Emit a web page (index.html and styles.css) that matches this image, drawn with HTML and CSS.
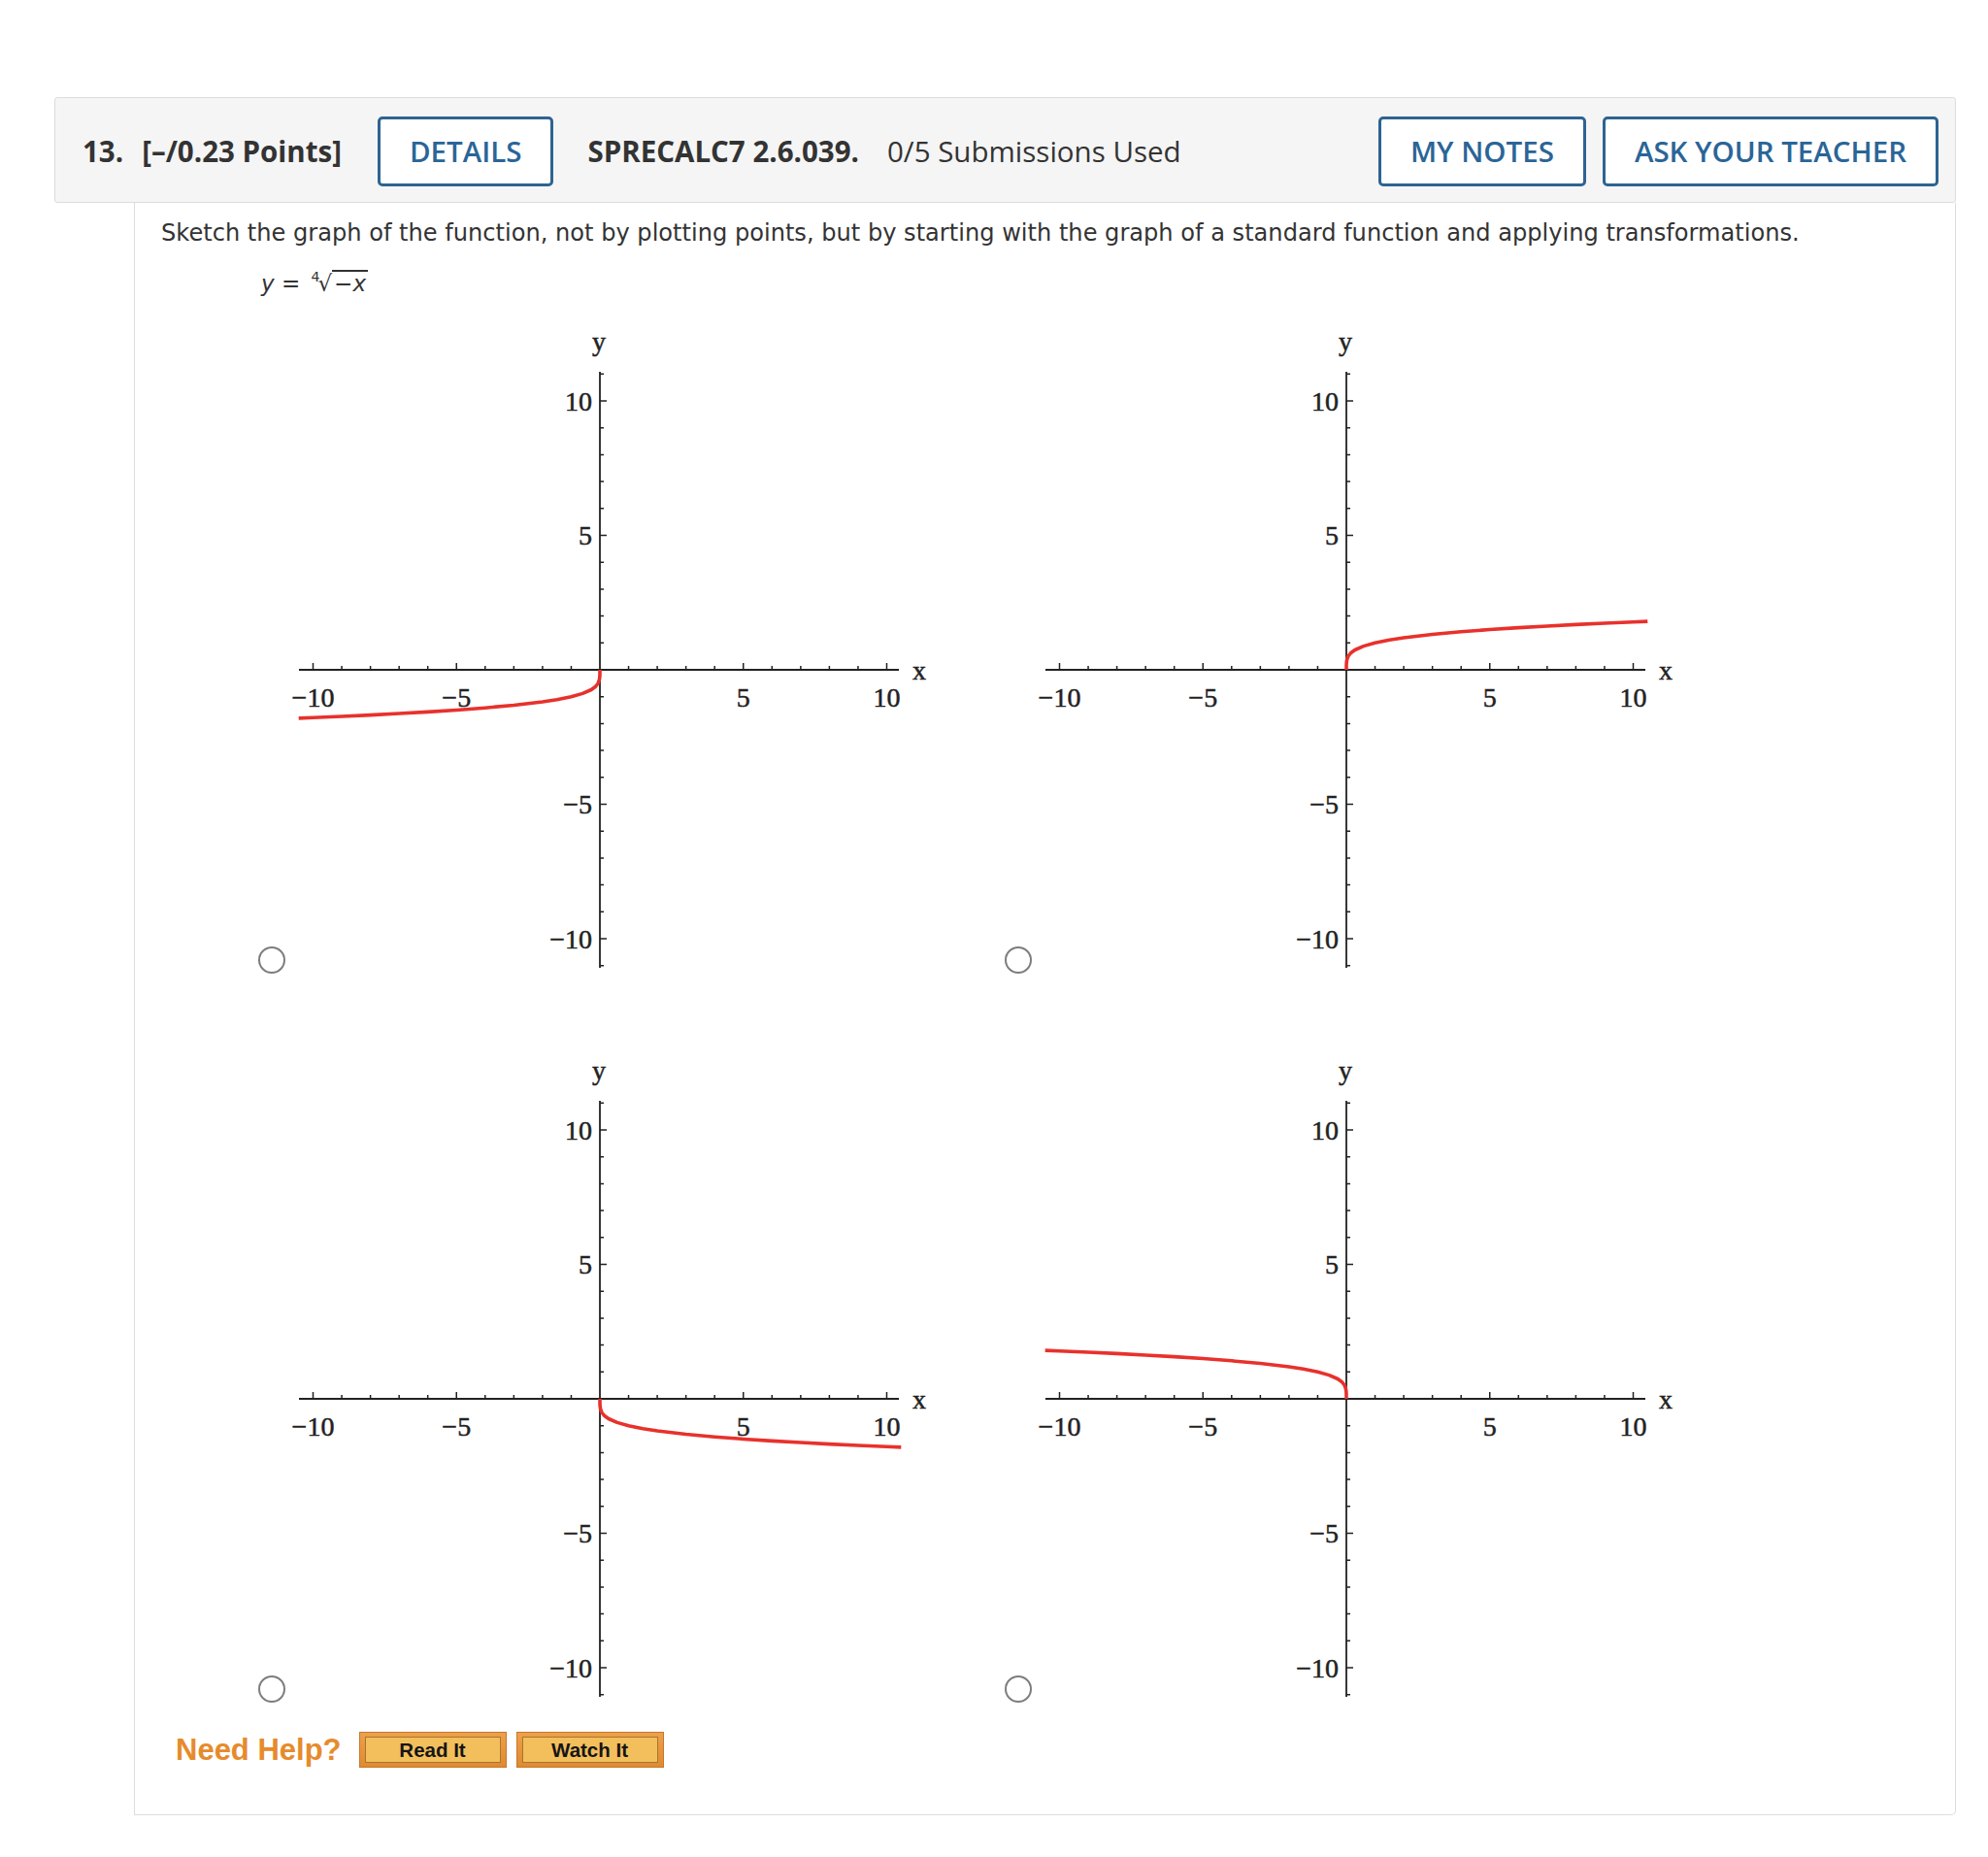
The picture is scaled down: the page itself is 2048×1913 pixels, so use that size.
FILE: index.html
```html
<!DOCTYPE html>
<html lang="en">
<head>
<meta charset="utf-8">
<title>Question 13</title>
<link rel="stylesheet" href="styles.css">
</head>
<body>
<svg class="defs" width="0" height="0" aria-hidden="true">
  <defs>
    <g id="axes">
      <path class="axis" d="M12,355H630M322,48V662"/>
      <path class="tick" d="M26.5,355v-7M56.05,355v-4M85.6,355v-4M115.15,355v-4M144.7,355v-4M174.25,355v-7M203.8,355v-4M233.35,355v-4M262.9,355v-4M292.45,355v-4M351.55,355v-4M381.1,355v-4M410.65,355v-4M440.2,355v-4M469.75,355v-7M499.3,355v-4M528.85,355v-4M558.4,355v-4M587.95,355v-4M617.5,355v-7"/>
      <path class="tick" d="M322,50.3h4M322,78h7M322,105.7h4M322,133.4h4M322,161.1h4M322,188.8h4M322,216.5h7M322,244.2h4M322,271.9h4M322,299.6h4M322,327.3h4M322,382.7h4M322,410.4h4M322,438.1h4M322,465.8h4M322,493.5h7M322,521.2h4M322,548.9h4M322,576.6h4M322,604.3h4M322,632h7M322,659.7h4"/>
      <text class="lbl mid" x="26.5" y="393">−10</text>
      <text class="lbl mid" x="174.25" y="393">−5</text>
      <text class="lbl mid" x="469.75" y="393">5</text>
      <text class="lbl mid" x="617.5" y="393">10</text>
      <text class="lbl end" x="314" y="87.5">10</text>
      <text class="lbl end" x="314" y="226">5</text>
      <text class="lbl end" x="314" y="503">−5</text>
      <text class="lbl end" x="314" y="641.5">−10</text>
      <text class="lbl" x="644" y="365">x</text>
      <text class="lbl mid" x="321" y="26">y</text>
    </g>
    <path id="root4" d="M0,0 L0.03,-4.93 L0.148,-7.37 L0.591,-10.42 L1.773,-13.71 L4.43,-17.24 L8.87,-20.5 L17.73,-24.38 L29.55,-27.7 L44.33,-30.66 L59.1,-32.94 L88.65,-36.46 L118.2,-39.17 L147.75,-41.42 L177.3,-43.35 L206.85,-45.06 L236.4,-46.59 L265.95,-47.98 L295.5,-49.26 L310.3,-49.86"/>
  </defs>
</svg>

<div class="question">
  <div class="header">
    <span class="qnum">13.</span>
    <span class="points">[–/0.23 Points]</span>
    <span class="btn btn-details">DETAILS</span>
    <span class="code">SPRECALC7 2.6.039.</span>
    <span class="subs">0/5 Submissions Used</span>
    <span class="spacer"></span>
    <span class="btn">MY NOTES</span>
    <span class="btn btn-ask">ASK YOUR TEACHER</span>
  </div>
  <div class="content">
    <p class="prompt">Sketch the graph of the function, not by plotting points, but by starting with the graph of a standard function and applying transformations.</p>
    <div class="formula"><i>y</i> = <span class="index">4</span><span class="surd">√</span><span class="radicand">−<i>x</i></span></div>

    <div class="choices">
      <div class="choice">
        <span class="radio"></span>
        <svg class="graph" width="665" height="670" viewBox="0 0 665 670">
          <use href="#axes"/>
          <g transform="translate(322,355) scale(-1,-1)"><use href="#root4" class="curve"/></g>
        </svg>
      </div>
      <div class="choice">
        <span class="radio"></span>
        <svg class="graph" width="665" height="670" viewBox="0 0 665 670">
          <use href="#axes"/>
          <g transform="translate(322,355)"><use href="#root4" class="curve"/></g>
        </svg>
      </div>
      <div class="choice">
        <span class="radio"></span>
        <svg class="graph" width="665" height="670" viewBox="0 0 665 670">
          <use href="#axes"/>
          <g transform="translate(322,355) scale(1,-1)"><use href="#root4" class="curve"/></g>
        </svg>
      </div>
      <div class="choice">
        <span class="radio"></span>
        <svg class="graph" width="665" height="670" viewBox="0 0 665 670">
          <use href="#axes"/>
          <g transform="translate(322,355) scale(-1,1)"><use href="#root4" class="curve"/></g>
        </svg>
      </div>
    </div>

    <div class="help">
      <span class="help-label">Need Help?</span>
      <span class="help-btn"><span class="help-inner">Read It</span></span>
      <span class="help-btn"><span class="help-inner">Watch It</span></span>
    </div>
  </div>
</div>
</body>
</html>
```

FILE: styles.css
```css
html, body {
  margin: 0;
  padding: 0;
  background: #ffffff;
}

.defs {
  position: absolute;
  width: 0;
  height: 0;
  overflow: hidden;
}

.question {
  margin: 100px 0 0 56px;
  width: 1959px;
}

.header {
  box-sizing: border-box;
  height: 109px;
  border: 1px solid #dddddd;
  border-radius: 3px;
  background: #f5f5f5;
  display: flex;
  align-items: center;
  padding: 2px 17px 0 28px;
  font-family: "Open Sans", "Liberation Sans", sans-serif;
  font-size: 29.5px;
  color: #333333;
}

.qnum {
  font-weight: 700;
  margin-right: 19px;
}

.points {
  font-weight: 700;
}

.btn {
  box-sizing: border-box;
  height: 72px;
  display: flex;
  align-items: center;
  padding: 0 30px;
  border: 3px solid #2e6392;
  border-radius: 5px;
  background: #ffffff;
  color: #2a6597;
  font-weight: 600;
  font-size: 29.5px;
}

.btn-details {
  margin-left: 37px;
}

.btn-ask {
  margin-left: 17px;
}

.code {
  font-weight: 700;
  margin-left: 35px;
}

.subs {
  margin-left: 29px;
}

.spacer {
  flex: 1;
}

.content {
  margin-left: 82px;
  border: 1px solid #dddddd;
  border-top: none;
  border-radius: 0 0 5px 0;
  padding: 16px 0 48px 27px;
  font-family: "DejaVu Sans", "Liberation Sans", sans-serif;
  color: #333333;
}

.prompt {
  margin: 0;
  font-size: 24.1px;
  line-height: 31px;
}

.formula {
  margin: 21px 0 0 103px;
  height: 31px;
  font-size: 23px;
  line-height: 31px;
  white-space: nowrap;
}

.index {
  display: inline-block;
  font-size: 14px;
  line-height: 14px;
  vertical-align: 10px;
  margin-left: 4px;
  margin-right: -2px;
}

.surd {
  display: inline-block;
}

.radicand {
  display: inline-block;
  border-top: 2px solid #333333;
  line-height: 24px;
  padding: 0 2px;
}

.choices {
  display: grid;
  grid-template-columns: 695px 695px;
  column-gap: 74px;
  row-gap: 81px;
  margin: 27px 0 0 100px;
}

.choice {
  display: flex;
  align-items: flex-end;
}

.radio {
  box-sizing: border-box;
  width: 28px;
  height: 28px;
  border: 2px solid #7d7d7d;
  border-radius: 50%;
  background: #ffffff;
  margin: 0 2px 2px 0;
  flex: none;
}

.graph {
  display: block;
  flex: none;
}

.axis {
  fill: none;
  stroke: #222222;
  stroke-width: 1.8;
}

.tick {
  fill: none;
  stroke: #222222;
  stroke-width: 1.5;
}

.lbl {
  font-family: "Liberation Serif", "DejaVu Serif", serif;
  font-size: 28px;
  fill: #222222;
  stroke: #222222;
  stroke-width: 0.5;
}

.mid {
  text-anchor: middle;
}

.end {
  text-anchor: end;
}

.curve {
  fill: none;
  stroke: #e8312c;
  stroke-width: 3.6;
  stroke-linejoin: round;
  stroke-linecap: butt;
}

.help {
  display: flex;
  align-items: center;
  margin: 28px 0 0 15px;
}

.help-label {
  font-family: "Liberation Sans", Arial, sans-serif;
  font-weight: 700;
  font-size: 31px;
  color: #e68b2b;
  margin-right: 18px;
}

.help-btn {
  box-sizing: border-box;
  width: 152px;
  height: 37px;
  padding: 4px 5px;
  background: linear-gradient(#eea04a, #e08a30);
  border: 1px solid #c4782d;
  margin-right: 10px;
}

.help-inner {
  box-sizing: border-box;
  display: flex;
  align-items: center;
  justify-content: center;
  height: 100%;
  border: 1px solid #a7762f;
  background: #f3bf5d;
  font-family: "Liberation Sans", Arial, sans-serif;
  font-weight: 700;
  font-size: 20.5px;
  color: #151515;
}
```
